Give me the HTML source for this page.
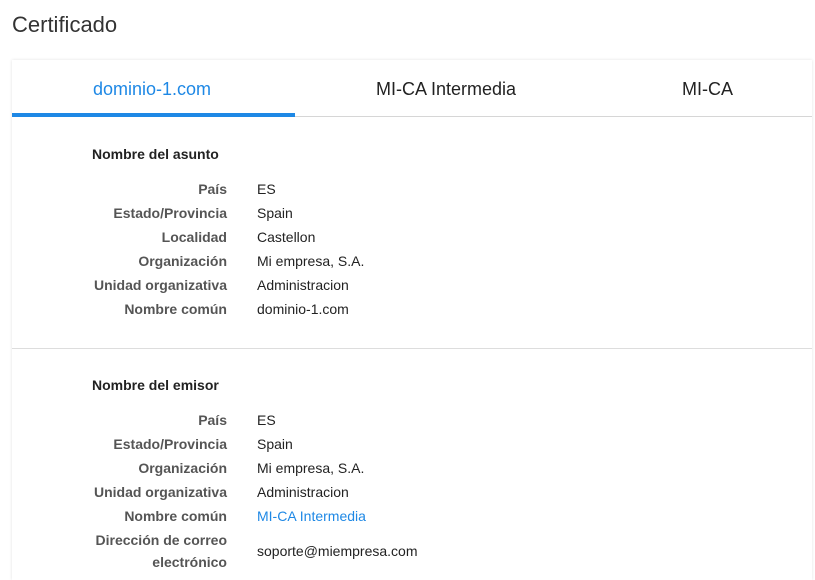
<!DOCTYPE html>
<html><head><meta charset="utf-8"><style>
body{margin:0;width:815px;height:573px;overflow:hidden;background:#fff;font-family:"Liberation Sans",sans-serif;color:#222;position:relative}
.a{position:absolute;white-space:nowrap}
h1{position:absolute;left:12px;top:12px;margin:0;font-weight:normal;font-size:22px;color:#333}
.card{position:absolute;left:12px;top:60px;width:800px;height:520px;background:#fff;box-shadow:0 0 3px rgba(0,0,0,.12)}
.tab{font-size:18px;top:79px;color:#222}
.lbl{font-size:14px;font-weight:bold;color:#555;text-align:right;right:588px}
.val{font-size:14px;left:257px;color:#222}
.hd{font-size:14px;font-weight:bold;color:#222;left:92px}
</style></head><body>
<h1>Certificado</h1>
<div class="card"></div>
<div class="a tab" style="left:93px;color:#1e88e5">dominio-1.com</div>
<div class="a tab" style="left:376px">MI-CA Intermedia</div>
<div class="a tab" style="left:682px">MI-CA</div>
<div class="a" style="left:12px;top:116px;width:800px;height:1px;background:#d6d6d6"></div>
<div class="a" style="left:12px;top:113px;width:283px;height:4px;background:#1e88e5"></div>
<div class="a hd" style="top:146px">Nombre del asunto</div>
<div class="a lbl" style="top:181px">País</div><div class="a val" style="top:181px">ES</div>
<div class="a lbl" style="top:205px">Estado/Provincia</div><div class="a val" style="top:205px">Spain</div>
<div class="a lbl" style="top:229px">Localidad</div><div class="a val" style="top:229px">Castellon</div>
<div class="a lbl" style="top:253px">Organización</div><div class="a val" style="top:253px">Mi empresa, S.A.</div>
<div class="a lbl" style="top:277px">Unidad organizativa</div><div class="a val" style="top:277px">Administracion</div>
<div class="a lbl" style="top:301px">Nombre común</div><div class="a val" style="top:301px">dominio-1.com</div>
<div class="a" style="left:12px;top:348px;width:800px;height:1px;background:#ddd"></div>
<div class="a hd" style="top:377px">Nombre del emisor</div>
<div class="a lbl" style="top:412px">País</div><div class="a val" style="top:412px">ES</div>
<div class="a lbl" style="top:436px">Estado/Provincia</div><div class="a val" style="top:436px">Spain</div>
<div class="a lbl" style="top:460px">Organización</div><div class="a val" style="top:460px">Mi empresa, S.A.</div>
<div class="a lbl" style="top:484px">Unidad organizativa</div><div class="a val" style="top:484px">Administracion</div>
<div class="a lbl" style="top:508px">Nombre común</div><div class="a val" style="top:508px;color:#1e88e5">MI-CA Intermedia</div>
<div class="a lbl" style="top:529px;line-height:22px">Dirección de correo<br>electrónico</div><div class="a val" style="top:543px">soporte@miempresa.com</div>
</body></html>
